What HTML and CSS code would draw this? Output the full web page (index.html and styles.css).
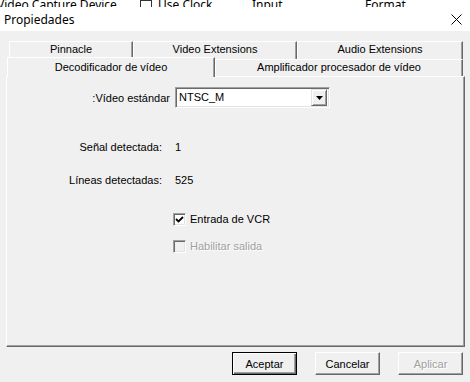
FILE: index.html
```html
<!DOCTYPE html>
<html lang="es">
<head>
<meta charset="utf-8">
<title>Propiedades</title>
<link rel="stylesheet" href="styles.css">
</head>
<body>
<div class="behind">
  <span class="bg-item bg-device">Video Capture Device</span>
  <span class="bg-check"></span>
  <span class="bg-item bg-clock">Use Clock</span>
  <span class="bg-item bg-input">Input</span>
  <span class="bg-item bg-format">Format</span>
</div>
<div class="dialog">
  <div class="titlebar">
    <span class="title">Propiedades</span>
    <svg class="close" width="11" height="11" viewBox="0 0 11 11"><path d="M0.5 0.5 L10.5 10.5 M10.5 0.5 L0.5 10.5" stroke="#000" stroke-width="1" fill="none"/></svg>
  </div>
  <div class="body">
    <div class="tabs">
      <div class="tabrow back">
        <div class="tab t-pinnacle">Pinnacle</div>
        <div class="tab t-video">Video Extensions</div>
        <div class="tab t-audio">Audio Extensions</div>
      </div>
      <div class="tabrow front">
        <div class="tab selected t-deco">Decodificador de vídeo</div>
        <div class="tab t-amp">Amplificador procesador de vídeo</div>
      </div>
    </div>
    <div class="panel">
      <div class="row-combo">
        <span class="combo-label">:Vídeo estándar</span>
        <div class="combo">
          <span class="combo-text">NTSC_M</span>
          <span class="combo-btn"><svg width="7" height="4" viewBox="0 0 7 4"><path d="M0 0 H7 L3.5 4 Z" fill="#000"/></svg></span>
        </div>
      </div>
      <div class="info info-first">
        <span class="info-label">Señal detectada:</span>
        <span class="info-value">1</span>
      </div>
      <div class="info info-second">
        <span class="info-label">Líneas detectadas:</span>
        <span class="info-value">525</span>
      </div>
      <div class="check-row check-first">
        <span class="checkbox checked"><svg width="9" height="9" viewBox="0 0 9 9"><path d="M1 4 L3.5 6.5 L8 2" stroke="#000" stroke-width="1.8" fill="none"/></svg></span>
        <span class="check-label">Entrada de VCR</span>
      </div>
      <div class="check-row check-second disabled">
        <span class="checkbox"></span>
        <span class="check-label">Habilitar salida</span>
      </div>
    </div>
    <div class="buttons">
      <button class="btn default">Aceptar</button>
      <button class="btn">Cancelar</button>
      <button class="btn disabled">Aplicar</button>
    </div>
  </div>
</div>
</body>
</html>
```
FILE: styles.css
```css
html, body {
  margin: 0;
  padding: 0;
}
body {
  width: 470px;
  height: 382px;
  overflow: hidden;
  background: #f0f0f0;
  font-family: "Liberation Sans", Arial, sans-serif;
  font-size: 11px;
  color: #000;
}

/* window behind the dialog, clipped */
.behind {
  height: 7px;
  overflow: hidden;
  background: #fff;
  display: flex;
  align-items: flex-start;
  font-family: "Noto Sans", "Liberation Sans", sans-serif;
  font-size: 12px;
  line-height: 12px;
  color: #000;
}
.bg-item {
  display: block;
  flex: none;
  margin-top: -1px;
  height: 8px;
  overflow: hidden;
  white-space: nowrap;
}
.bg-device {
  margin-left: -3px;
  width: 143px;
}
.bg-check {
  display: block;
  flex: none;
  box-sizing: border-box;
  width: 12px;
  height: 12px;
  border: 1px solid #333;
  margin-top: 0;
  margin-right: 6px;
}
.bg-clock { width: 94px; }
.bg-input { width: 113px; }
.bg-format { width: 60px; }

.dialog {
  background: #f0f0f0;
}
.titlebar {
  height: 24px;
  background: #fff;
  display: flex;
  align-items: center;
  justify-content: space-between;
  padding: 0 8px 0 4px;
  font-family: "Noto Sans", "Open Sans", sans-serif;
  font-size: 12px;
}
.close {
  display: block;
}

.body {
  padding: 10px 5px 0 6px;
}

/* tabs */
.tabs {
  display: flex;
  flex-direction: column;
}
.tabrow {
  display: flex;
}
.tabrow.back {
  margin-left: 3px;
  height: 16px;
}
.tabrow.front {
  margin-left: 1px;
  height: 19px;
}
.tab {
  box-sizing: border-box;
  background: #f0f0f0;
  border-top: 1px solid #fff;
  border-left: 1px solid #fff;
  border-right: 1px solid #696969;
  box-shadow: inset -1px 0 #a0a0a0;
  text-align: center;
  white-space: nowrap;
}
.back .tab {
  height: 18px;
  line-height: 15px;
}
.t-pinnacle { width: 124px; }
.t-video { width: 164px; }
.t-audio { width: 166px; }
.t-deco {
  width: 208px;
  height: 20px;
  line-height: 18px;
  position: relative;
  z-index: 1;
}
.t-amp {
  width: 248px;
  height: 17px;
  margin-top: 2px;
  line-height: 14px;
}

/* panel */
.panel {
  box-sizing: border-box;
  width: 459px;
  height: 271px;
  border-top: 1px solid #fff;
  border-left: 1px solid #fff;
  border-right: 1px solid #696969;
  border-bottom: 1px solid #696969;
  box-shadow: inset -1px -1px #a0a0a0;
  padding-top: 10px;
}
.row-combo {
  display: flex;
  align-items: center;
  height: 21px;
}
.combo-label {
  width: 163px;
  text-align: right;
}
.combo {
  box-sizing: border-box;
  margin-left: 5px;
  width: 155px;
  height: 21px;
  background: #fff;
  border-top: 1px solid #a0a0a0;
  border-left: 1px solid #a0a0a0;
  border-right: 1px solid #fff;
  border-bottom: 1px solid #fff;
  box-shadow: inset 1px 1px #696969, inset -1px -1px #e3e3e3;
  display: flex;
  align-items: center;
  justify-content: space-between;
  padding: 1px 2px 1px 3px;
}
.combo-text {
  line-height: 13px;
}
.combo-btn {
  box-sizing: border-box;
  width: 16px;
  height: 17px;
  background: #f0f0f0;
  border-top: 1px solid #e3e3e3;
  border-left: 1px solid #e3e3e3;
  border-right: 1px solid #696969;
  border-bottom: 1px solid #696969;
  box-shadow: inset 1px 1px #fff, inset -1px -1px #a0a0a0;
  display: flex;
  align-items: center;
  justify-content: center;
}
.combo-btn svg { display: block; }

.info {
  display: flex;
  height: 13px;
  line-height: 13px;
}
.info-first { margin-top: 33px; }
.info-second { margin-top: 20px; }
.info-label {
  width: 155px;
  text-align: right;
}
.info-value {
  margin-left: 13px;
}

.check-row {
  display: flex;
  align-items: center;
  height: 13px;
  line-height: 13px;
  padding-left: 166px;
}
.check-first { margin-top: 26px; }
.check-second { margin-top: 14px; }
.checkbox {
  box-sizing: border-box;
  width: 13px;
  height: 13px;
  background: #fff;
  border-top: 1px solid #a0a0a0;
  border-left: 1px solid #a0a0a0;
  border-right: 1px solid #fff;
  border-bottom: 1px solid #fff;
  box-shadow: inset 1px 1px #696969, inset -1px -1px #e3e3e3;
  display: flex;
  align-items: center;
  justify-content: center;
}
.checkbox svg { display: block; }
.check-label {
  margin-left: 4px;
}
.disabled .checkbox {
  background: #f0f0f0;
}
.disabled .check-label {
  color: #a0a0a0;
  text-shadow: 1px 1px #fff;
}

/* buttons */
.buttons {
  display: flex;
  justify-content: flex-end;
  gap: 18px;
  margin-top: 5px;
  padding-right: 2px;
}
.btn {
  box-sizing: border-box;
  width: 65px;
  height: 23px;
  padding: 0;
  margin: 0;
  font-family: "Liberation Sans", Arial, sans-serif;
  font-size: 11px;
  color: #000;
  background: #f0f0f0;
  border-top: 1px solid #fff;
  border-left: 1px solid #fff;
  border-right: 1px solid #696969;
  border-bottom: 1px solid #696969;
  box-shadow: inset -1px -1px #a0a0a0;
  border-radius: 0;
}
.btn.default {
  border: 1px solid #000;
  box-shadow: inset 1px 1px #fff, inset -1px -1px #696969, inset -2px -2px #a0a0a0;
}
.btn.disabled {
  color: #a0a0a0;
  text-shadow: 1px 1px #fff;
}
```
